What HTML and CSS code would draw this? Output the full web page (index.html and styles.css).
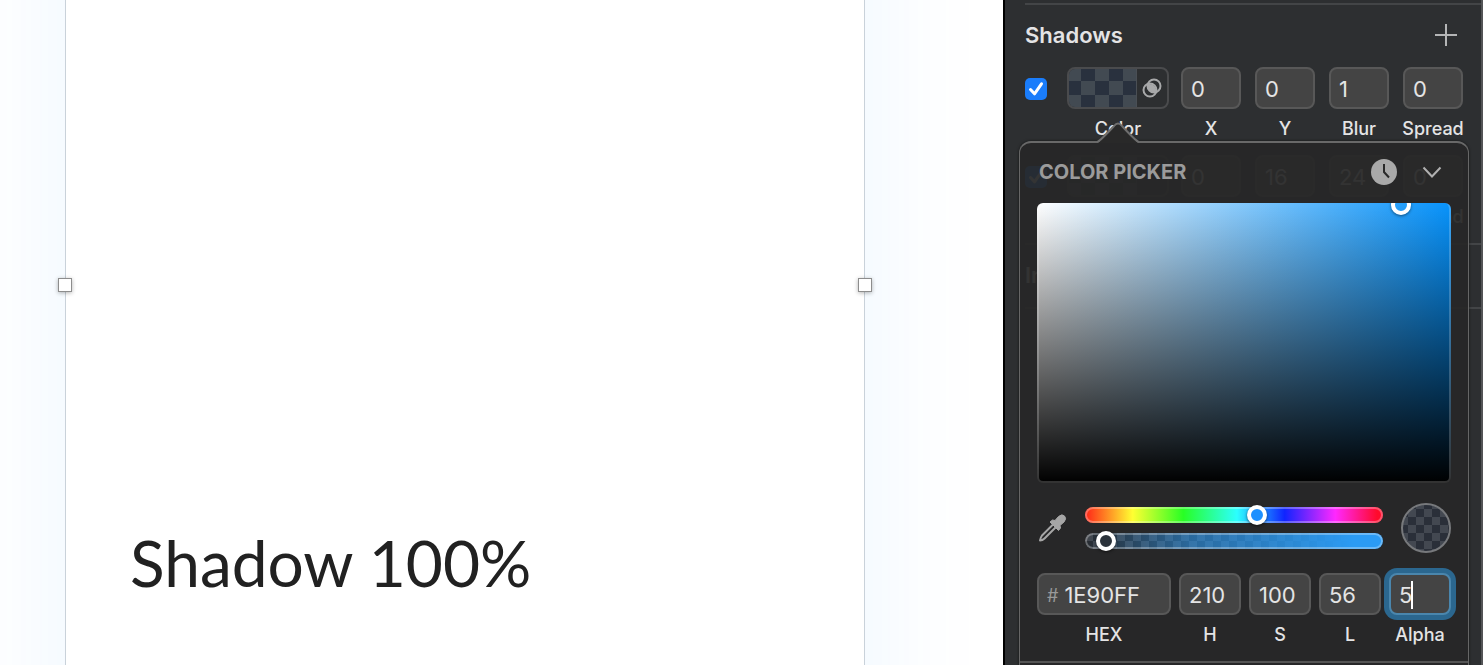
FILE: index.html
```html
<!DOCTYPE html>
<html lang="en">
<head>
<meta charset="utf-8">
<title>Shadows</title>
<link rel="stylesheet" href="styles.css">
</head>
<body>
<main class="canvas">
  <section class="artboard">
    <h1 class="artboard-title">Shadow 100%</h1>
    <span class="handle handle-left"></span>
    <span class="handle handle-right"></span>
  </section>
</main>

<aside class="inspector">
  <section class="section">
    <header class="section-head">
      <h2>Shadows</h2>
      <button class="icon-button" aria-label="Add shadow"><svg width="24" height="24" viewBox="0 0 24 24"><path d="M12 1v22M1 12h22" stroke="#b4b5b6" stroke-width="2" fill="none"/></svg></button>
    </header>

    <div class="shadow-row">
      <span class="check"><input type="checkbox" checked aria-label="Enable shadow 1"><svg viewBox="0 0 22 22"><path d="M5.5 11.5l4 4.3 7-10" /></svg></span>
      <div class="control color-control">
        <div class="color-well">
          <button class="swatch" id="color1"></button>
          <button class="blend" aria-label="Blend mode"><svg width="20" height="20" viewBox="0 0 20 20"><circle cx="8" cy="12" r="6.5"/><circle cx="12" cy="8" r="6.5"/><path class="fill" d="M5.8 6.2A6.5 6.5 0 0 1 13.8 14.2A6.5 6.5 0 0 1 5.8 6.2Z"/></svg></button>
        </div>
        <label for="color1">Color</label>
      </div>
      <div class="values">
        <div class="control"><input class="field" id="x1" value="0"><label for="x1">X</label></div>
        <div class="control"><input class="field" id="y1" value="0"><label for="y1">Y</label></div>
        <div class="control"><input class="field" id="blur1" value="1"><label for="blur1">Blur</label></div>
        <div class="control"><input class="field" id="spread1" value="0"><label for="spread1">Spread</label></div>
      </div>
    </div>

    <div class="shadow-row">
      <span class="check"><input type="checkbox" checked aria-label="Enable shadow 2"><svg viewBox="0 0 22 22"><path d="M5.5 11.5l4 4.3 7-10" /></svg></span>
      <div class="control color-control">
        <div class="color-well">
          <button class="swatch" id="color2"></button>
          <button class="blend" aria-label="Blend mode"></button>
        </div>
        <label for="color2">Color</label>
      </div>
      <div class="values">
        <div class="control"><input class="field" id="x2" value="0"><label for="x2">X</label></div>
        <div class="control"><input class="field" id="y2" value="16"><label for="y2">Y</label></div>
        <div class="control"><input class="field" id="blur2" value="24"><label for="blur2">Blur</label></div>
        <div class="control"><input class="field" id="spread2" value="0"><label for="spread2">Spread</label></div>
      </div>
    </div>
  </section>

  <section class="section">
    <header class="section-head"><h2>Inner Shadows</h2></header>
  </section>
  <section class="section"></section>

  <div class="popover">
    <svg class="popover-arrow" width="42" height="22" viewBox="0 0 42 22"><path class="arrow-fill" d="M0 22C4 21 6 17 17 5Q21 0 25 5C36 17 38 21 42 22Z"/><path class="arrow-line" d="M0 21C3 20 6 17 17 5Q21 0 25 5C36 17 39 20 42 21"/></svg>
    <header class="popover-head">
      <h3>COLOR PICKER</h3>
      <button class="icon-button" aria-label="Recent colors"><svg width="28" height="28" viewBox="0 0 28 28"><circle cx="14" cy="14" r="13" fill="#a9a9a9"/><path d="M14 6v8l5 5.500" stroke="#292929" stroke-width="2" fill="none"/></svg></button>
      <button class="icon-button" aria-label="Collapse"><svg width="20" height="20" viewBox="0 0 20 20"><path d="M1.500 5.500L10 14.500l8.500-9" stroke="#b0b0b0" stroke-width="2" fill="none"/></svg></button>
    </header>

    <div class="spectrum"><span class="spectrum-knob"></span></div>

    <div class="mixer">
      <button class="icon-button" aria-label="Pick a color from the screen"><svg width="30" height="30" viewBox="0 0 30 30"><path d="M16.500 11L5 22.500Q3.500 24.500 3 27.500 5.500 27.500 7.500 25.500L19 14" fill="none" stroke="#a6a6a6" stroke-width="2" stroke-linejoin="round"/><path d="M13 9l2.500-2 2.500.5 3.500-4Q25 .5 27.500 3t-.5 6l-4 3.500.5 2.500-2 2.500Z" fill="#a6a6a6" stroke="#a6a6a6" stroke-linejoin="round"/></svg></button>
      <div class="sliders">
        <input class="slider hue" type="range" min="0" max="360" value="210" aria-label="Hue">
        <input class="slider alpha" type="range" min="0" max="100" value="4" aria-label="Opacity">
      </div>
      <span class="preview"></span>
    </div>

    <div class="color-fields">
      <div class="control">
        <div class="hex-field field"><span>#</span><input id="hex" value="1E90FF"></div>
        <label for="hex">HEX</label>
      </div>
      <div class="control"><input class="field" id="h" value="210"><label for="h">H</label></div>
      <div class="control"><input class="field" id="s" value="100"><label for="s">S</label></div>
      <div class="control"><input class="field" id="l" value="56"><label for="l">L</label></div>
      <div class="control alpha-control"><input class="field active" id="a" value="5"><span class="caret"></span><label for="a">Alpha</label></div>
    </div>
  </div>
</aside>
</body>
</html>
```
FILE: styles.css
```css
* { box-sizing: border-box; }

body {
  margin: 0;
  height: 100vh;
  display: flex;
  overflow: hidden;
  background: #fff;
  color: #e4e4e5;
  font-family: Inter, "Liberation Sans", sans-serif;
}

h1, h2, h3 { margin: 0; }

button, input {
  margin: 0;
  padding: 0;
  border: 0;
  background: none;
  color: inherit;
  font: inherit;
}

button svg { display: block; }

/* Canvas */
.canvas {
  flex: 1;
  display: flex;
  padding: 0 138px 0 65px;
  overflow: hidden;
}

/* The artboard runs past the top and bottom of the visible canvas */
.artboard {
  position: relative;
  flex: 1;
  display: flex;
  align-items: flex-end;
  margin: -160px 0;
  padding: 0 64px 222px;
  border: solid #c9d2da;
  border-width: 0 1px;
  background: #fff;
  box-shadow: 0 0 120px rgba(30, 144, 255, 0.08);
}

.artboard-title {
  color: #212121;
  font: 400 64px/80px Lato, "Noto Sans", sans-serif;
  white-space: nowrap;
}

.handle {
  position: absolute;
  top: 438px;
  width: 14px;
  height: 14px;
  border: 1px solid #8d8d8d;
  background: #fff;
  box-shadow: 0 1px 4px rgba(0, 0, 0, 0.3);
}

.handle-left { left: -8px; }
.handle-right { right: -8px; }

/* Inspector */
.inspector {
  position: relative;
  width: 480px;
  padding-top: 3px;
  border-left: 2px solid #000;
  border-right: 2px solid #535456;
  background: #2d2f31;
  overflow: hidden;
}

.section {
  margin-left: 20px;
  padding-right: 18px;
  border-top: 2px solid #434547;
}

.section-head {
  display: flex;
  align-items: center;
  justify-content: space-between;
  height: 60px;
  padding-right: 5px;
  margin-bottom: 2px;
}

.section-head h2 {
  font-size: 22px;
  line-height: 28px;
  font-weight: 600;
}

.shadow-row {
  display: flex;
  align-items: flex-start;
  padding-bottom: 16px;
}

.check {
  display: grid;
  width: 22px;
  height: 22px;
  margin: 11px 20px 0 0;
}

.check > * {
  grid-area: 1 / 1;
  width: 22px;
  height: 22px;
}

.check input {
  appearance: none;
  border-radius: 5px;
  background: #1a7dfb;
}

.check svg {
  pointer-events: none;
  fill: none;
  stroke: #fff;
  stroke-width: 3;
  stroke-linecap: round;
  stroke-linejoin: round;
}

.control {
  display: flex;
  flex-direction: column;
  align-items: center;
  gap: 10px;
  min-width: 0;
}

.control label {
  font-size: 18px;
  line-height: 20px;
  font-weight: 500;
  white-space: nowrap;
}

.color-control {
  width: 102px;
  margin-right: 12px;
}

.color-well {
  display: flex;
  width: 100%;
  height: 42px;
  border: 2px solid #4a4b4d;
  border-radius: 8px;
  overflow: hidden;
}

.swatch {
  width: 68px;
  border-right: 1px solid #4a4f55;
  background: repeating-conic-gradient(#29313e 0 25%, #424a52 0 50%) -2px -2px / 28px 28px;
}

.blend {
  flex: 1;
  display: grid;
  place-items: center;
}

.blend circle {
  fill: none;
  stroke: #a8a9aa;
  stroke-width: 2;
}

.blend .fill { fill: #a8a9aa; }

.values {
  flex: 1;
  display: grid;
  grid-template-columns: repeat(4, minmax(0, 1fr));
  gap: 14px;
}

.field {
  width: 100%;
  height: 42px;
  padding: 2px 8px 0;
  border: 2px solid #585858;
  border-radius: 8px;
  background: #444;
  font-size: 22px;
}

/* Color picker popover */
.popover {
  position: absolute;
  top: 141px;
  left: 14px;
  right: 12px;
  bottom: -20px;
  padding: 0 17px;
  border: 1px solid #666;
  border-top: 2px solid #696969;
  border-radius: 12px;
  background: rgba(39, 39, 39, 0.94);
  box-shadow: 0 0 3px rgba(0, 0, 0, 0.6);
}

.popover-arrow {
  position: absolute;
  top: -22px;
  left: 77px;
}

.arrow-fill { fill: #292929; }

.arrow-line {
  fill: none;
  stroke: #6e6e6e;
  stroke-width: 2;
}

.popover-head {
  display: flex;
  align-items: center;
  gap: 24px;
  height: 58px;
  padding: 0 9px 0 2px;
  margin-bottom: 2px;
}

.popover-head h3 {
  flex: 1;
  color: #9b9b9b;
  font-size: 20px;
  line-height: 24px;
  font-weight: 700;
}

.spectrum {
  position: relative;
  height: 280px;
  border: 2px solid rgba(255, 255, 255, 0.2);
  border-top: 0;
  border-radius: 6px;
  overflow: hidden;
  background: linear-gradient(to top, #000, transparent) border-box, linear-gradient(to right, #fff, #0793fc) border-box;
}

.spectrum-knob {
  position: absolute;
  top: -8px;
  right: 38px;
  width: 20px;
  height: 20px;
  border: 4px solid #fff;
  border-radius: 50%;
  box-shadow: 0 1px 3px rgba(0, 0, 0, 0.5);
}

.mixer {
  display: flex;
  align-items: center;
  gap: 18px;
  margin: 20px 0;
}

.sliders {
  flex: 1;
  display: grid;
  gap: 10px;
}

.slider {
  appearance: none;
  display: block;
  width: 100%;
  height: 16px;
  border-radius: 8px;
  box-shadow: inset 0 0 0 2px rgba(255, 255, 255, 0.3);
}

.slider::-webkit-slider-thumb {
  appearance: none;
  width: 20px;
  height: 20px;
  border: 4px solid #fff;
  border-radius: 50%;
  box-shadow: 0 1px 3px rgba(0, 0, 0, 0.6);
}

.hue { background: linear-gradient(to right, #ff2418, #ffff32 16%, #28ff24 33%, #2cffff 51%, #1024ff 67%, #ff28ff 84%, #ff0a2c 98%); }
.hue::-webkit-slider-thumb { background: #1e90ff; }

.alpha { background: linear-gradient(to right, rgba(43, 155, 244, 0), rgba(43, 155, 244, 0.55) 35%, #2b9bf4 90%), repeating-conic-gradient(#282b30 0 25%, #42454b 0 50%) 0 0 / 16px 16px; }
.alpha::-webkit-slider-thumb { background: #2b333b; }

.preview {
  width: 50px;
  height: 50px;
  border: 2px solid #77797c;
  border-radius: 50%;
  background: repeating-conic-gradient(#2a2f39 0 25%, #434851 0 50%) 5px 4px / 16px 16px;
}

.color-fields {
  display: grid;
  grid-template-columns: 134fr repeat(4, 62fr);
  gap: 8px;
  margin: 0 -17px;
  padding: 0 17px 16px;
  border-bottom: 2px solid #545454;
}

.hex-field {
  display: flex;
  align-items: center;
  gap: 6px;
}

.hex-field span {
  color: #999;
  font-size: 18px;
}

.hex-field input {
  flex: 1;
  min-width: 0;
}

.alpha-control { position: relative; }

.active {
  border-color: #4a86ad;
  box-shadow: 0 0 0 5px #2b678f;
}

.caret {
  position: absolute;
  top: 8px;
  left: 22px;
  width: 2px;
  height: 28px;
  background: #fff;
}
```
